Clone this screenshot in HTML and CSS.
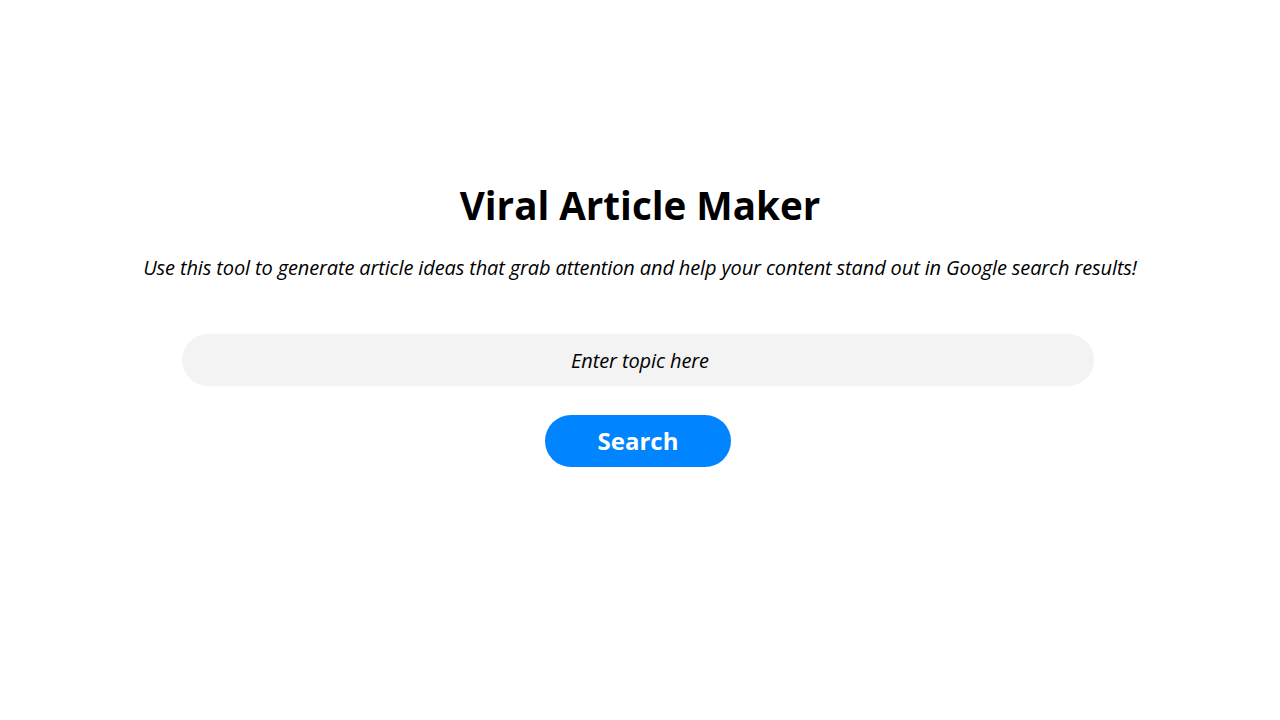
FILE: index.html
```html
<!DOCTYPE html>
<html lang="en">
<head>
<meta charset="utf-8">
<title>Viral Article Maker</title>
<link rel="stylesheet" href="styles.css">
</head>
<body>
<main class="page">
  <h1 class="title">Viral Article Maker</h1>
  <p class="subtitle">Use this tool to generate article ideas that grab attention and help your content stand out in Google search results!</p>
  <form class="search-form">
    <input class="topic-input" type="text" placeholder="Enter topic here">
    <button class="search-btn" type="button">Search</button>
  </form>
</main>
</body>
</html>
```
FILE: styles.css
```css
* { box-sizing: border-box; }
html, body { margin: 0; padding: 0; background: #ffffff; }
body {
  font-family: "Open Sans", "Liberation Sans", sans-serif;
  color: #000;
}
.page {
  display: flex;
  flex-direction: column;
  align-items: center;
  padding-top: 181px;
}
.title {
  margin: 0;
  font-size: 38.6px;
  line-height: 48px;
  font-weight: 700;
}
.subtitle {
  margin: 25px 0 0;
  font-size: 20px;
  line-height: 28px;
  font-style: italic;
  letter-spacing: -0.13px;
}
.search-form {
  display: flex;
  flex-direction: column;
  align-items: center;
  margin-top: 52px;
  margin-right: 4px;
  gap: 29px;
}
.topic-input {
  width: 912px;
  height: 52px;
  border: none;
  border-radius: 26px;
  background: #f3f3f3;
  font-family: "Open Sans", "Liberation Sans", sans-serif;
  font-size: 20px;
  font-style: italic;
  letter-spacing: -0.1px;
  text-align: center;
  color: #000;
  outline: none;
  padding: 0 20px 0 24px;
}
.topic-input::placeholder { color: #000; opacity: 1; }
.search-btn {
  width: 186px;
  height: 52px;
  border: none;
  border-radius: 26px;
  background: #0084ff;
  color: #fff;
  font-family: "Open Sans", "Liberation Sans", sans-serif;
  font-size: 24px;
  font-weight: 700;
  cursor: pointer;
  padding: 0 0 2px;
}
```
